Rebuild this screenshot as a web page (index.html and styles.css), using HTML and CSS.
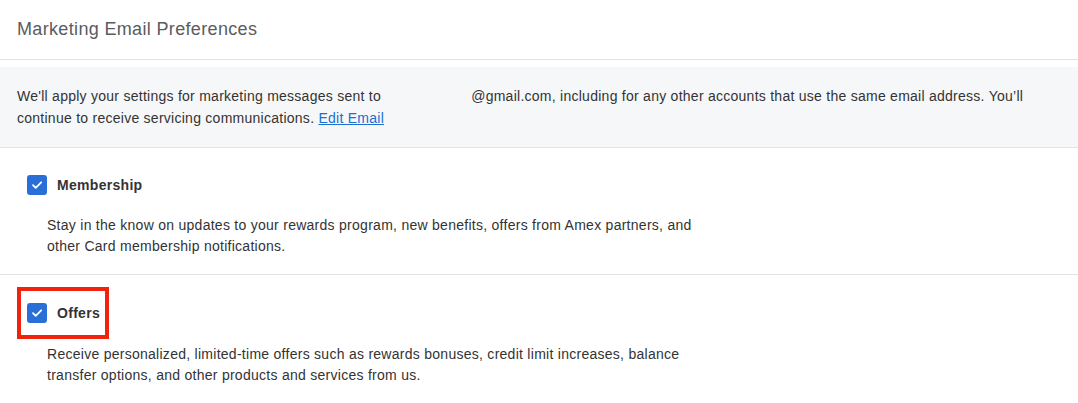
FILE: index.html
```html
<!DOCTYPE html>
<html lang="en">
<head>
    <meta charset="UTF-8">
    <title>Marketing Email Preferences</title>
    <link rel="stylesheet" href="styles.css">
</head>
<body>

<div class="prefs">
    <!-- title -->
    <div class="prefs-header">
        <h2>Marketing Email Preferences</h2>
    </div>

    <!-- notice -->
    <div class="notice">
        <p>We'll apply your settings for marketing messages sent to <span class="redacted"></span>@gmail.com, including for any other accounts that use the same email address. You’ll continue to receive servicing communications. <a href="#">Edit Email</a></p>
    </div>

    <!-- options -->
    <div class="option">
        <label class="option-row">
            <span class="checkbox checked">
                <svg viewBox="0 0 20 20" width="20" height="20"><path d="M6 10.2l2.7 2.7L14.2 7.3" fill="none" stroke="#fff" stroke-width="1.8" stroke-linecap="round" stroke-linejoin="round"/></svg>
            </span>
            <span class="option-label">Membership</span>
        </label>
        <p class="option-desc">Stay in the know on updates to your rewards program, new benefits, offers from Amex partners, and other Card membership notifications.</p>
    </div>

    <div class="option">
        <label class="option-row">
            <span class="highlight"></span>
            <span class="checkbox checked">
                <svg viewBox="0 0 20 20" width="20" height="20"><path d="M6 10.2l2.7 2.7L14.2 7.3" fill="none" stroke="#fff" stroke-width="1.8" stroke-linecap="round" stroke-linejoin="round"/></svg>
            </span>
            <span class="option-label">Offers</span>
        </label>
        <p class="option-desc">Receive personalized, limited-time offers such as rewards bonuses, credit limit increases, balance transfer options, and other products and services from us.</p>
    </div>
</div>

</body>
</html>
```

FILE: styles.css
```css
/* base */
body {
    margin: 0;
    background: #fff;
    font-family: "Liberation Sans", Arial, sans-serif;
    color: #333;
}
.prefs {
    width: 1078px;
}
/* header */
.prefs-header {
    height: 59px;
    display: flex;
    align-items: center;
    padding-left: 17px;
    border-bottom: 1px solid #e3e3e3;
}
.prefs-header h2 {
    margin: 0;
    font-size: 18px;
    font-weight: normal;
    color: #5a5c60;
    letter-spacing: 0.34px;
}
/* notice */
.notice {
    margin-top: 7px;
    background: #f6f7f9;
    padding: 18px 40px 18px 17px;
    border-bottom: 1px solid #e3e3e3;
}
.notice p {
    margin: 0;
    font-size: 14px;
    line-height: 22px;
    letter-spacing: 0.26px;
}
.redacted {
    display: inline-block;
    width: 86px;
}
.notice a {
    color: #1a6fd1;
    text-decoration: underline;
}
/* options */
.option {
    padding: 27px 0 17px 27px;
    border-bottom: 1px solid #e3e3e3;
}
.option:last-child {
    border-bottom: none;
    padding-top: 28px;
}
.option-row {
    position: relative;
    display: flex;
    align-items: center;
    gap: 10px;
    height: 20px;
}
.checkbox {
    width: 20px;
    height: 20px;
    border-radius: 3px;
    background: #2a6fd8;
    display: flex;
}
.option-label {
    font-size: 14px;
    font-weight: bold;
    color: #333;
    letter-spacing: 0.3px;
}
.option-desc {
    margin: 20px 0 0 20px;
    max-width: 660px;
    font-size: 14px;
    line-height: 21px;
    letter-spacing: 0.27px;
}
.option:last-child .option-desc {
    margin-top: 21px;
}
/* red annotation box */
.highlight {
    position: absolute;
    left: -10px;
    top: -16px;
    width: 84px;
    height: 44px;
    border: 4px solid #f0220e;
}
```
